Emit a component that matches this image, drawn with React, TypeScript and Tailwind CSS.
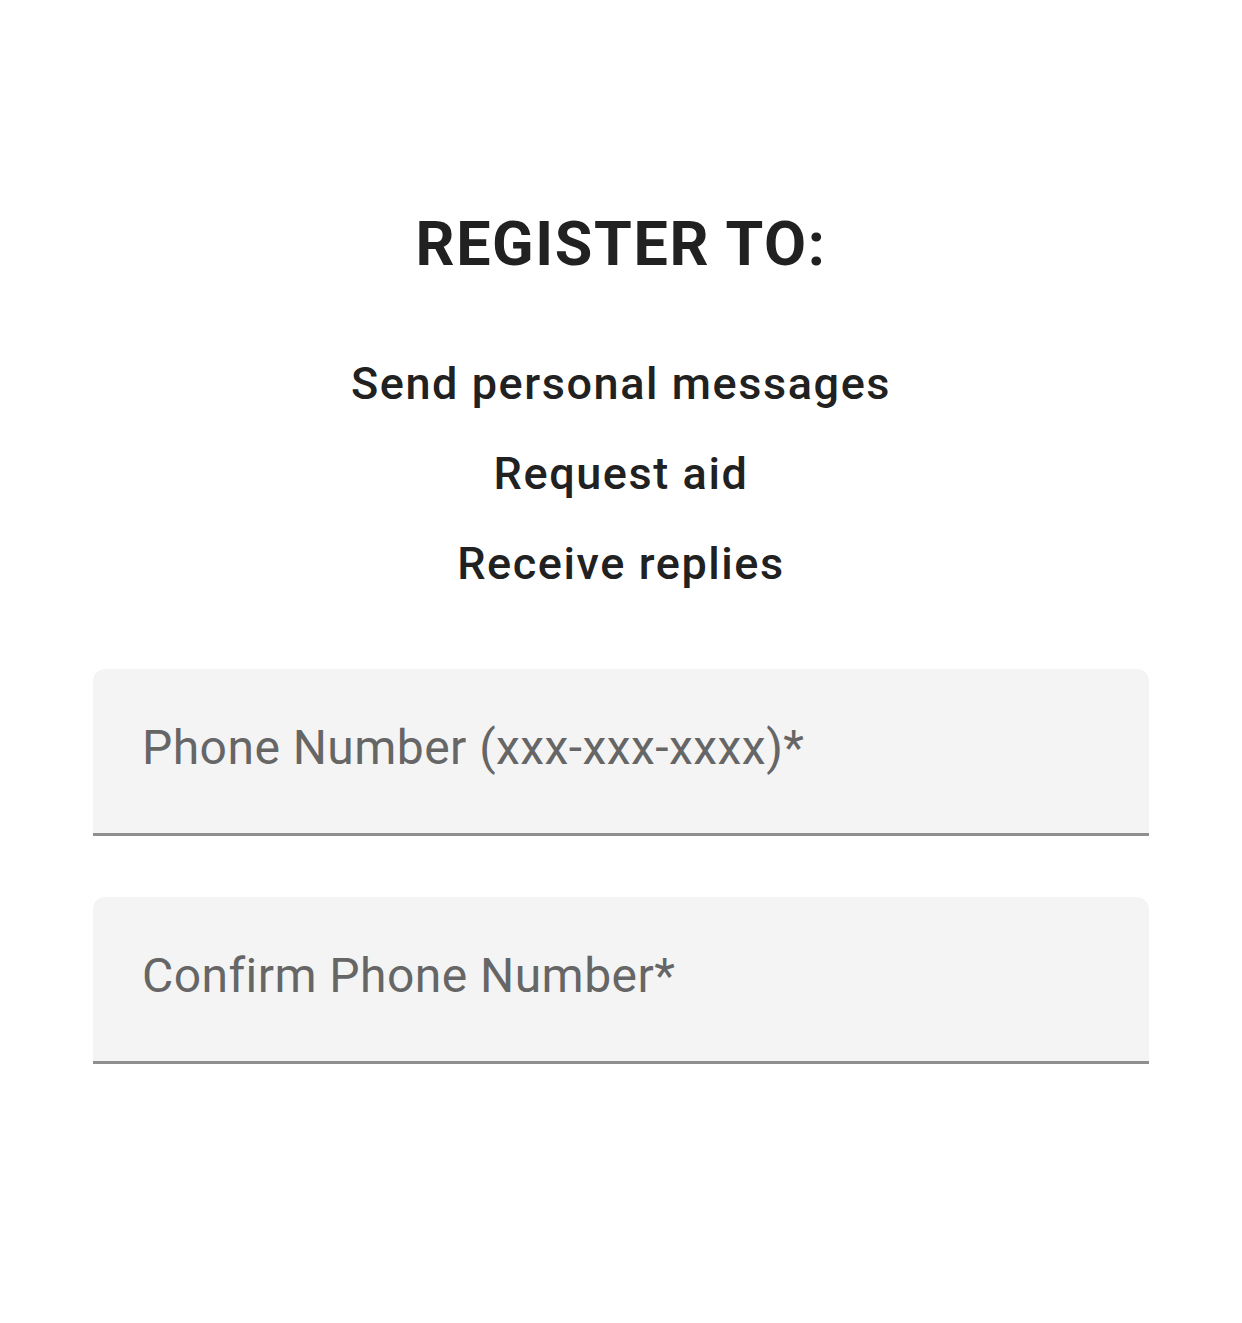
import React from "react";

export default function App() {
  return (
    <div className="min-h-[1323px] w-full bg-white" style={{ fontFamily: "Roboto, 'Noto Sans', sans-serif" }}>
      <div className="flex flex-col items-center pt-[214px] px-[93px]">
        <h1 className="text-[61px] leading-[61px] font-bold tracking-[0.027em] text-[#212121]">REGISTER TO:</h1>
        <div className="mt-[64px] flex flex-col items-center text-[45px] leading-[90px] font-medium tracking-[0.035em] text-[#212121]">
          <div>Send personal messages</div>
          <div>Request aid</div>
          <div>Receive replies</div>
        </div>
        <div className="mt-[60px] flex w-full flex-col gap-[61px]">
          <Field label="Phone Number (xxx-xxx-xxxx)*" />
          <Field label="Confirm Phone Number*" />
        </div>
      </div>
    </div>
  );
}

function Field({ label }: { label: string }) {
  return (
    <div className="flex h-[167px] w-full items-center rounded-t-[12px] border-b-[3px] border-[#8f8f8f] bg-[#f4f4f4] pl-[49px] pb-[6px]">
      <span className="text-[48px] leading-none tracking-[0.00938em] text-[#666666]">{label}</span>
    </div>
  );
}
